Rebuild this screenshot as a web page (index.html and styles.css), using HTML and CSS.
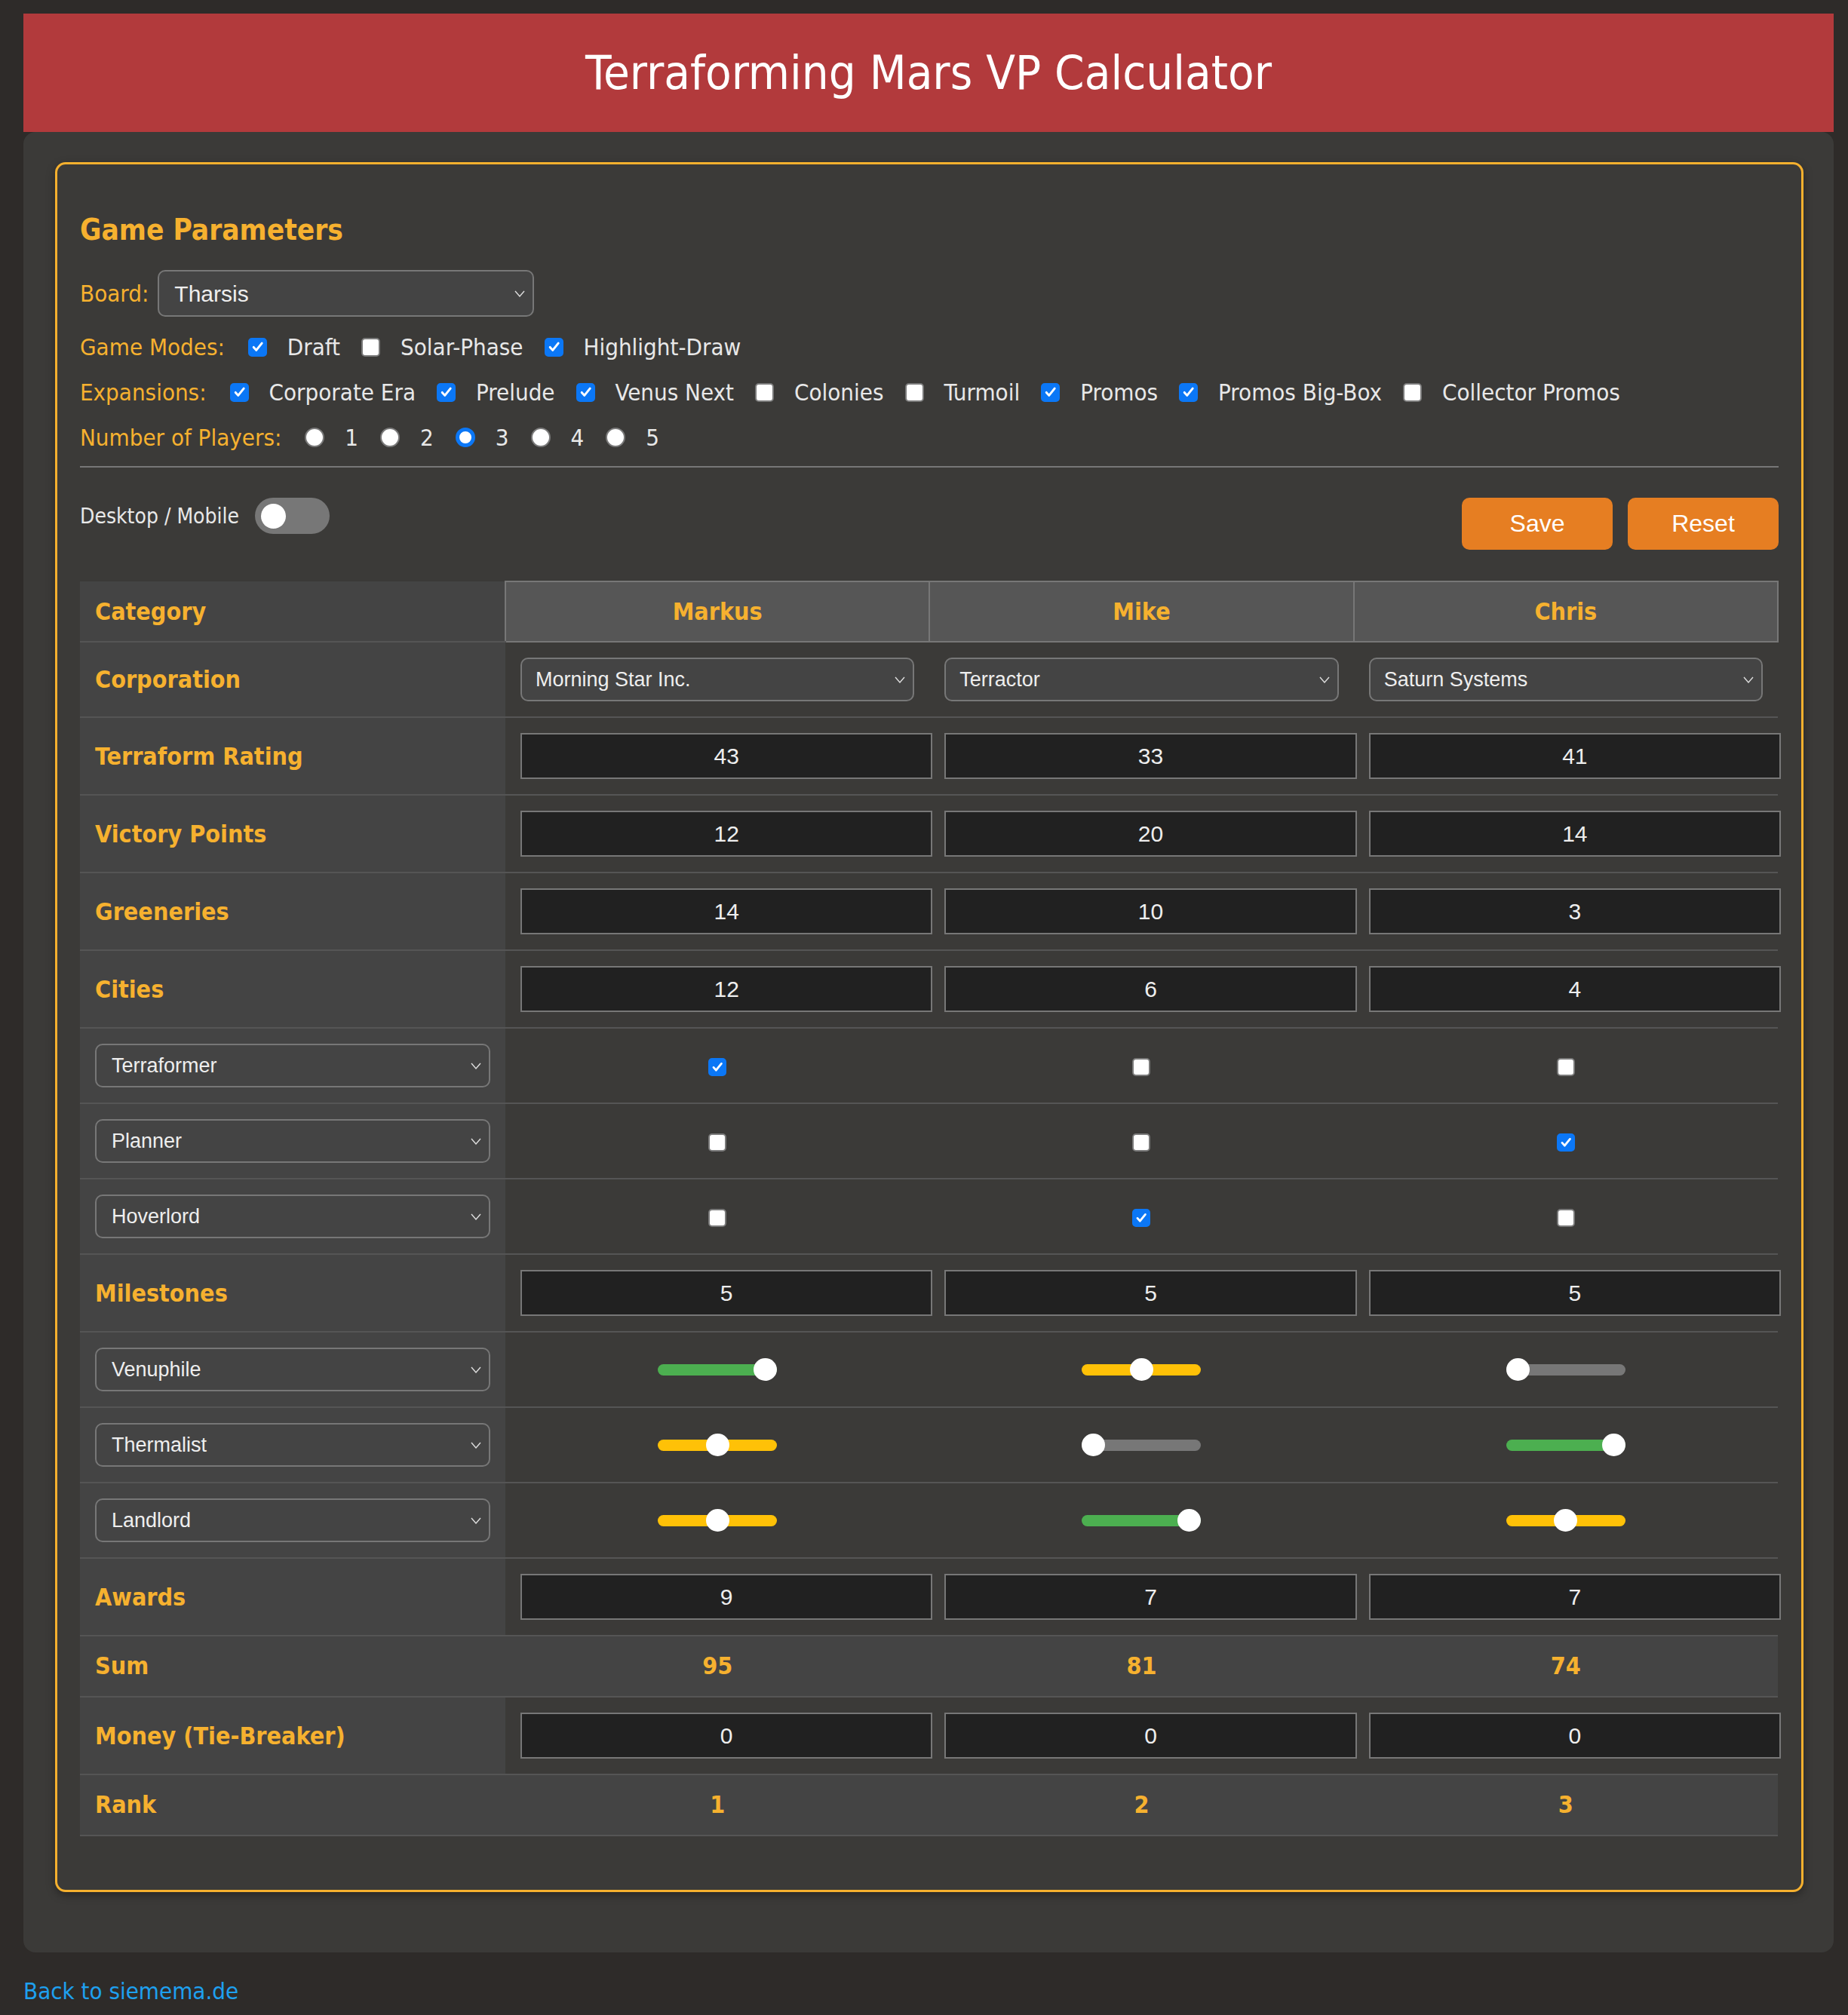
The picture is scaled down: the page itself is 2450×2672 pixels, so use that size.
FILE: index.html
```html
<!DOCTYPE html>
<html lang="en">
<head>
<meta charset="utf-8">
<title>Terraforming Mars VP Calculator</title>
<link rel="stylesheet" href="styles.css">
</head>
<body>
<header class="site-header"><h1>Terraforming Mars VP Calculator</h1></header>
<main class="container">
  <section class="card">
    <h2 class="section-title">Game Parameters</h2>
    <div class="param-row board-row">
      <span class="param-label">Board:</span>
      <div class="select-wrap board-select">
        <select><option>Tharsis</option></select>
        <svg class="chev" viewBox="0 0 14 9"><polyline points="1,1 7,8 13,1"/></svg>
      </div>
    </div>
    <div class="param-row">
      <span class="param-label">Game Modes:</span>
      <label class="opt"><span class="cb on"><svg viewBox="0 0 24 24"><path d="M6 12.5l4 4.5L18.5 6.5"/></svg></span>Draft</label>
      <label class="opt"><span class="cb"></span>Solar-Phase</label>
      <label class="opt"><span class="cb on"><svg viewBox="0 0 24 24"><path d="M6 12.5l4 4.5L18.5 6.5"/></svg></span>Highlight-Draw</label>
    </div>
    <div class="param-row">
      <span class="param-label">Expansions:</span>
      <label class="opt"><span class="cb on"><svg viewBox="0 0 24 24"><path d="M6 12.5l4 4.5L18.5 6.5"/></svg></span>Corporate Era</label>
      <label class="opt"><span class="cb on"><svg viewBox="0 0 24 24"><path d="M6 12.5l4 4.5L18.5 6.5"/></svg></span>Prelude</label>
      <label class="opt"><span class="cb on"><svg viewBox="0 0 24 24"><path d="M6 12.5l4 4.5L18.5 6.5"/></svg></span>Venus Next</label>
      <label class="opt"><span class="cb"></span>Colonies</label>
      <label class="opt"><span class="cb"></span>Turmoil</label>
      <label class="opt"><span class="cb on"><svg viewBox="0 0 24 24"><path d="M6 12.5l4 4.5L18.5 6.5"/></svg></span>Promos</label>
      <label class="opt"><span class="cb on"><svg viewBox="0 0 24 24"><path d="M6 12.5l4 4.5L18.5 6.5"/></svg></span>Promos Big-Box</label>
      <label class="opt"><span class="cb"></span>Collector Promos</label>
    </div>
    <div class="param-row">
      <span class="param-label">Number of Players:</span>
      <label class="opt radio-opt"><span class="rb"></span>1</label>
      <label class="opt radio-opt"><span class="rb"></span>2</label>
      <label class="opt radio-opt"><span class="rb on"></span>3</label>
      <label class="opt radio-opt"><span class="rb"></span>4</label>
      <label class="opt radio-opt"><span class="rb"></span>5</label>
    </div>
    <hr class="divider">
    <div class="toolbar">
      <div class="view-toggle">
        <span>Desktop / Mobile</span>
        <span class="switch"><span class="knob"></span></span>
      </div>
      <div class="actions">
        <button class="btn">Save</button>
        <button class="btn">Reset</button>
      </div>
    </div>
    <table class="score">
      <colgroup><col class="col-cat"><col><col><col></colgroup>
      <thead>
        <tr><th class="cat">Category</th><th class="player">Markus</th><th class="player">Mike</th><th class="player">Chris</th></tr>
      </thead>
      <tbody>
        <tr>
          <td class="cat">Corporation</td>
          <td><div class="select-wrap"><select><option>Morning Star Inc.</option></select><svg class="chev" viewBox="0 0 14 9"><polyline points="1,1 7,8 13,1"/></svg></div></td>
          <td><div class="select-wrap"><select><option>Terractor</option></select><svg class="chev" viewBox="0 0 14 9"><polyline points="1,1 7,8 13,1"/></svg></div></td>
          <td><div class="select-wrap"><select><option>Saturn Systems</option></select><svg class="chev" viewBox="0 0 14 9"><polyline points="1,1 7,8 13,1"/></svg></div></td>
        </tr>
        <tr><td class="cat">Terraform Rating</td><td><input class="num" type="text" value="43"></td><td><input class="num" type="text" value="33"></td><td><input class="num" type="text" value="41"></td></tr>
        <tr><td class="cat">Victory Points</td><td><input class="num" type="text" value="12"></td><td><input class="num" type="text" value="20"></td><td><input class="num" type="text" value="14"></td></tr>
        <tr><td class="cat">Greeneries</td><td><input class="num" type="text" value="14"></td><td><input class="num" type="text" value="10"></td><td><input class="num" type="text" value="3"></td></tr>
        <tr><td class="cat">Cities</td><td><input class="num" type="text" value="12"></td><td><input class="num" type="text" value="6"></td><td><input class="num" type="text" value="4"></td></tr>
        <tr>
          <td class="cat"><div class="select-wrap"><select><option>Terraformer</option></select><svg class="chev" viewBox="0 0 14 9"><polyline points="1,1 7,8 13,1"/></svg></div></td>
          <td class="center"><span class="cb small on"><svg viewBox="0 0 24 24"><path d="M6 12.5l4 4.5L18.5 6.5"/></svg></span></td>
          <td class="center"><span class="cb small"></span></td>
          <td class="center"><span class="cb small"></span></td>
        </tr>
        <tr>
          <td class="cat"><div class="select-wrap"><select><option>Planner</option></select><svg class="chev" viewBox="0 0 14 9"><polyline points="1,1 7,8 13,1"/></svg></div></td>
          <td class="center"><span class="cb small"></span></td>
          <td class="center"><span class="cb small"></span></td>
          <td class="center"><span class="cb small on"><svg viewBox="0 0 24 24"><path d="M6 12.5l4 4.5L18.5 6.5"/></svg></span></td>
        </tr>
        <tr>
          <td class="cat"><div class="select-wrap"><select><option>Hoverlord</option></select><svg class="chev" viewBox="0 0 14 9"><polyline points="1,1 7,8 13,1"/></svg></div></td>
          <td class="center"><span class="cb small"></span></td>
          <td class="center"><span class="cb small on"><svg viewBox="0 0 24 24"><path d="M6 12.5l4 4.5L18.5 6.5"/></svg></span></td>
          <td class="center"><span class="cb small"></span></td>
        </tr>
        <tr><td class="cat">Milestones</td><td><input class="num" type="text" value="5"></td><td><input class="num" type="text" value="5"></td><td><input class="num" type="text" value="5"></td></tr>
        <tr>
          <td class="cat"><div class="select-wrap"><select><option>Venuphile</option></select><svg class="chev" viewBox="0 0 14 9"><polyline points="1,1 7,8 13,1"/></svg></div></td>
          <td class="center"><input class="award v2" type="range" min="0" max="2" value="2"></td>
          <td class="center"><input class="award v1" type="range" min="0" max="2" value="1"></td>
          <td class="center"><input class="award v0" type="range" min="0" max="2" value="0"></td>
        </tr>
        <tr>
          <td class="cat"><div class="select-wrap"><select><option>Thermalist</option></select><svg class="chev" viewBox="0 0 14 9"><polyline points="1,1 7,8 13,1"/></svg></div></td>
          <td class="center"><input class="award v1" type="range" min="0" max="2" value="1"></td>
          <td class="center"><input class="award v0" type="range" min="0" max="2" value="0"></td>
          <td class="center"><input class="award v2" type="range" min="0" max="2" value="2"></td>
        </tr>
        <tr>
          <td class="cat"><div class="select-wrap"><select><option>Landlord</option></select><svg class="chev" viewBox="0 0 14 9"><polyline points="1,1 7,8 13,1"/></svg></div></td>
          <td class="center"><input class="award v1" type="range" min="0" max="2" value="1"></td>
          <td class="center"><input class="award v2" type="range" min="0" max="2" value="2"></td>
          <td class="center"><input class="award v1" type="range" min="0" max="2" value="1"></td>
        </tr>
        <tr><td class="cat">Awards</td><td><input class="num" type="text" value="9"></td><td><input class="num" type="text" value="7"></td><td><input class="num" type="text" value="7"></td></tr>
        <tr class="total"><td class="cat">Sum</td><td>95</td><td>81</td><td>74</td></tr>
        <tr><td class="cat">Money (Tie-Breaker)</td><td><input class="num" type="text" value="0"></td><td><input class="num" type="text" value="0"></td><td><input class="num" type="text" value="0"></td></tr>
        <tr class="total"><td class="cat">Rank</td><td>1</td><td>2</td><td>3</td></tr>
      </tbody>
    </table>
  </section>
</main>
<a class="back" href="#">Back to siemema.de</a>
</body>
</html>
```
FILE: styles.css
```css
* { box-sizing: border-box; }
html, body { margin: 0; }
body {
  background: #2e2b29;
  font-family: "DejaVu Sans Condensed", "DejaVu Sans", sans-serif;
  font-stretch: condensed;
  color: #e8e8e8;
  padding: 18px 19px 0 31px;
  min-height: 2672px;
}
.site-header {
  background: #b23a3c;
  height: 157px;
  display: flex;
  align-items: center;
  justify-content: center;
}
.site-header h1 {
  margin: 0;
  font-weight: normal;
  font-size: 63px;
  color: #fff;
}
.container {
  background: #3b3a38;
  border-radius: 16px;
  padding: 40px 40px 80px 42px;
}
.card {
  border: 3px solid #f5b02e;
  border-radius: 14px;
  padding: 30px 30px 71px;
  box-shadow: 0 4px 12px rgba(0,0,0,0.35);
}
.section-title {
  margin: 33px 0 29px;
  font-size: 38.5px;
  line-height: 48px;
  font-weight: bold;
  color: #f6b12f;
}
.param-row {
  display: flex;
  align-items: center;
  min-height: 40px;
  margin-top: 20px;
  font-size: 31px;
}
.param-row.board-row { margin-top: 0; min-height: 62px; }
.param-label { color: #f6b12f; margin-right: 31px; }
.board-row .param-label { margin-right: 12px; }
.opt {
  display: flex;
  align-items: center;
  gap: 27px;
  margin-right: 28px;
  color: #e8e8e8;
}
.radio-opt { margin-right: 29px; }
.cb {
  width: 25px;
  height: 25px;
  border-radius: 5px;
  background: #fff;
  border: 2px solid #7a7a7a;
  display: inline-flex;
  align-items: center;
  justify-content: center;
  flex: none;
}
.cb.on { background: #0b77f6; border-color: #0b77f6; }
.cb svg { width: 22px; height: 22px; }
.cb svg path { fill: none; stroke: #fff; stroke-width: 3.4; stroke-linecap: round; stroke-linejoin: round; }
.cb.small { width: 24px; height: 24px; }
.rb {
  width: 26px;
  height: 26px;
  border-radius: 50%;
  background: #fff;
  border: 2px solid #7a7a7a;
  flex: none;
}
.rb.on { border: 5px solid #0b77f6; }
.select-wrap { position: relative; }
.select-wrap select {
  appearance: none;
  -webkit-appearance: none;
  width: 100%;
  height: 58px;
  background: #444;
  color: #eee;
  border: 2px solid #777;
  border-radius: 10px;
  font-family: "Liberation Sans", Arial, sans-serif;
  font-size: 27px;
  padding: 0 44px 0 18px;
  margin: 0;
}
.select-wrap .chev {
  position: absolute;
  right: 12px;
  top: 50%;
  width: 14px;
  height: 9px;
  margin-top: -4px;
  pointer-events: none;
}
.chev polyline { fill: none; stroke: #ddd; stroke-width: 1.4; }
.board-select { width: 499px; }
.board-select select { height: 62px; font-size: 30px; padding-left: 20px; }
.divider {
  border: 0;
  height: 2px;
  background: #777;
  margin: 18px 0 0;
}
.toolbar {
  display: flex;
  justify-content: space-between;
  align-items: flex-start;
  margin-top: 40px;
}
.view-toggle {
  display: flex;
  align-items: center;
  gap: 21px;
  font-size: 28px;
  color: #e8e8e8;
}
.switch {
  width: 99px;
  height: 48px;
  border-radius: 24px;
  background: #777;
  display: flex;
  align-items: center;
  padding-left: 8px;
}
.knob { width: 33px; height: 33px; border-radius: 50%; background: #fff; }
.actions { display: flex; gap: 20px; }
.btn {
  width: 200px;
  height: 69px;
  border: 0;
  border-radius: 10px;
  background: #e67e22;
  color: #fff;
  font-family: "Liberation Sans", Arial, sans-serif;
  font-size: 32px;
  padding: 0;
}
.score {
  width: 100%;
  margin-top: 41px;
  border-collapse: collapse;
  table-layout: fixed;
}
.col-cat { width: 564px; }
.score th, .score td {
  padding: 20px;
  vertical-align: middle;
  border-bottom: 2px solid #555;
  font-size: 32px;
  line-height: 38px;
  font-weight: bold;
  color: #f6b12f;
}
.score th { text-align: center; }
.score th.cat { text-align: left; background: #444; }
.score th.player { background: #565656; border: 2px solid #777; }
.score td.cat { background: #444; text-align: left; }
.score td.cat .select-wrap select { font-size: 27px; padding-left: 20px; }
.score td.center { text-align: center; }
.score td.center .cb { vertical-align: middle; }
.score tr.total td { background: #444; text-align: center; line-height: 39px; }
.score tr.total td.cat { text-align: left; }
.num {
  display: block;
  width: 100%;
  box-sizing: content-box;
  height: 57px;
  padding: 0 10px;
  margin: 0;
  border: 2px solid #777;
  background: #212121;
  color: #eee;
  font-family: "Liberation Sans", Arial, sans-serif;
  font-size: 30px;
  text-align: center;
}
.award {
  -webkit-appearance: none;
  appearance: none;
  display: block;
  margin: 0 auto;
  width: 158px;
  height: 15px;
  border-radius: 8px;
  background: #777;
  outline: none;
}
.award.v1 { background: #ffc107; }
.award.v2 { background: #4caf50; }
.award::-webkit-slider-thumb {
  -webkit-appearance: none;
  appearance: none;
  width: 31px;
  height: 30px;
  border-radius: 50%;
  background: #fff;
  border: 0;
}
.back {
  display: inline-block;
  margin-top: 33px;
  font-size: 31px;
  line-height: 36px;
  color: #1ea0ef;
  text-decoration: none;
}
```
